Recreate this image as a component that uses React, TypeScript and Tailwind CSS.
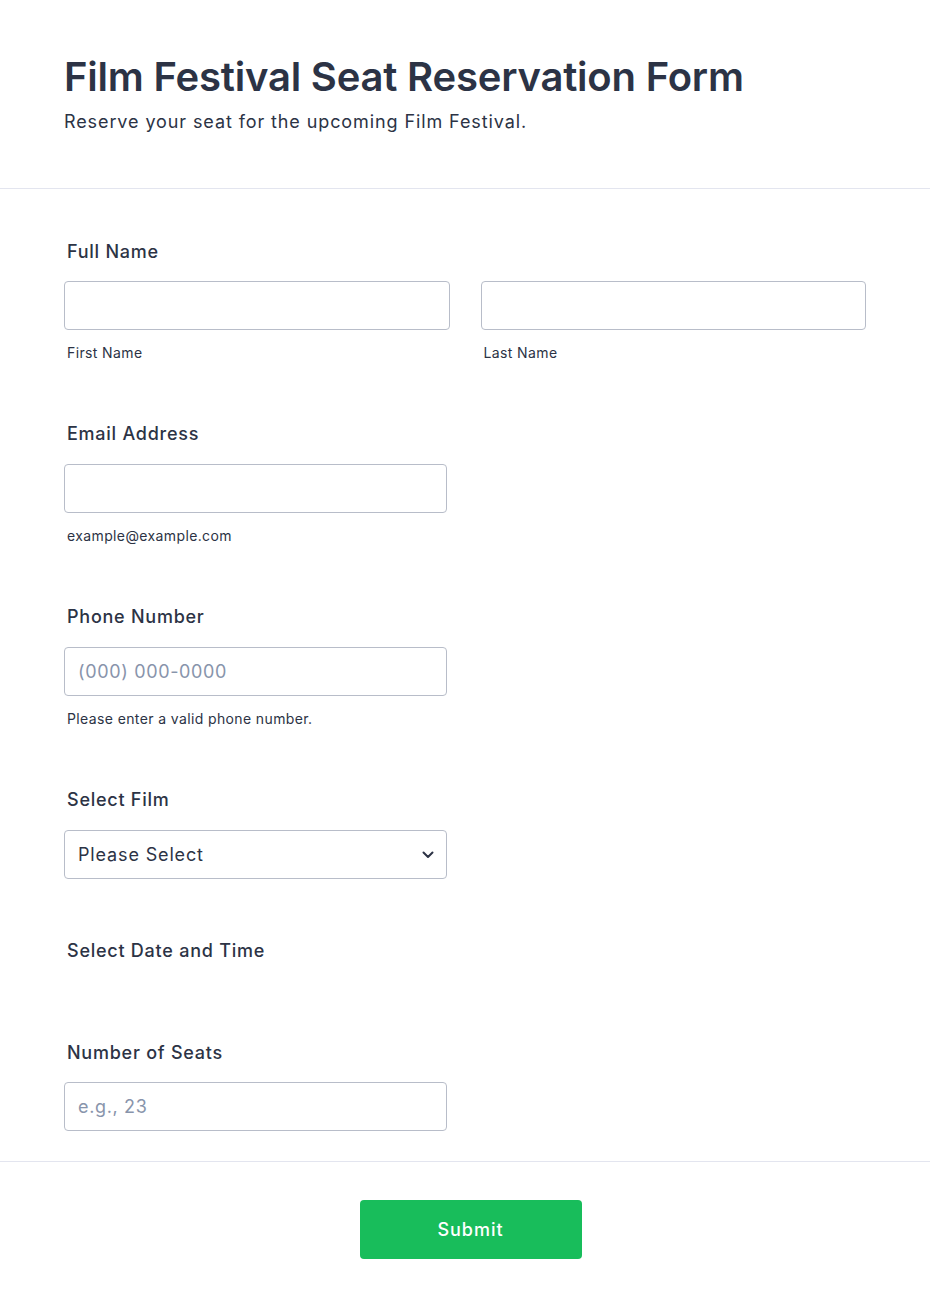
import React from 'react';

const labelCls = 'block pl-[3px] pt-[1px] text-[18px] leading-7 font-medium tracking-[0.75px] text-[#2c3345]';
const subCls = 'block pl-[3px] mt-[13px] text-[14px] leading-5 tracking-[0.38px] text-[#2c3345]';
const inputCls =
  'block w-full h-[49px] rounded-[4px] border border-[#b8bdc9] bg-white px-[13px] text-[18px] tracking-[0.65px] text-[#2c3345] placeholder:text-[#8894ab] outline-none';

const App: React.FC = () => {
  return (
    <div className="min-h-screen bg-white font-['Inter',sans-serif] text-[#2c3345]">
      {/* Header */}
      <div className="px-16 pt-[53px] pb-[52px] border-b border-[#e3e5ef]">
        <h1 className="text-[40px] leading-[48px] font-semibold tracking-[-0.2px]">
          Film Festival Seat Reservation Form
        </h1>
        <p className="mt-[7px] text-[18px] leading-7 tracking-[0.9px]">Reserve your seat for the upcoming Film Festival.</p>
      </div>

      <div className="px-16 pt-[48px] pb-[30px] border-b border-[#e3e5ef]">
        {/* Full name */}
        <label className={labelCls}>Full Name</label>
        <div className="mt-[15px] grid grid-cols-2 gap-[31px]">
          <div>
            <input className={inputCls} />
            <span className={subCls}>First Name</span>
          </div>
          <div>
            <input className={inputCls} />
            <span className={subCls}>Last Name</span>
          </div>
        </div>

        {/* Email */}
        <div className="mt-[56px]">
          <label className={labelCls}>Email Address</label>
          <div className="mt-[16px] w-[383px]">
            <input className={inputCls} />
            <span className={subCls}>example@example.com</span>
          </div>
        </div>

        {/* Phone */}
        <div className="mt-[56px]">
          <label className={labelCls}>Phone Number</label>
          <div className="mt-[16px] w-[383px]">
            <input className={inputCls} placeholder="(000) 000-0000" />
            <span className={subCls}>Please enter a valid phone number.</span>
          </div>
        </div>

        {/* Film */}
        <div className="mt-[56px]">
          <label className={labelCls}>Select Film</label>
          <div className="mt-[16px] w-[383px]">
            <div className="flex items-center justify-between h-[49px] rounded-[4px] border border-[#b8bdc9] bg-white pl-[13px] pr-[12px]">
              <span className="text-[18px] tracking-[0.85px] text-[#2c3345]">Please Select</span>
              <svg width="12" height="8" viewBox="0 0 12 8" fill="none">
                <path d="M1.5 1.5L6 6L10.5 1.5" stroke="#2c3345" strokeWidth="2" strokeLinecap="round" strokeLinejoin="round" />
              </svg>
            </div>
          </div>
        </div>

        {/* Date */}
        <div className="mt-[57px]">
          <label className={labelCls}>Select Date and Time</label>
        </div>

        {/* Seats */}
        <div className="mt-[73px]">
          <label className={labelCls}>Number of Seats</label>
          <div className="mt-[15px] w-[383px]">
            <input className={inputCls} placeholder="e.g., 23" />
          </div>
        </div>
      </div>

      <div className="flex justify-center pt-[38px] pb-[50px]">
        <button className="ml-[11px] w-[222px] h-[59px] rounded-[4px] bg-[#18bd5b] text-white text-[18px] font-medium tracking-[1px]">
          Submit
        </button>
      </div>
    </div>
  );
};

export default App;
